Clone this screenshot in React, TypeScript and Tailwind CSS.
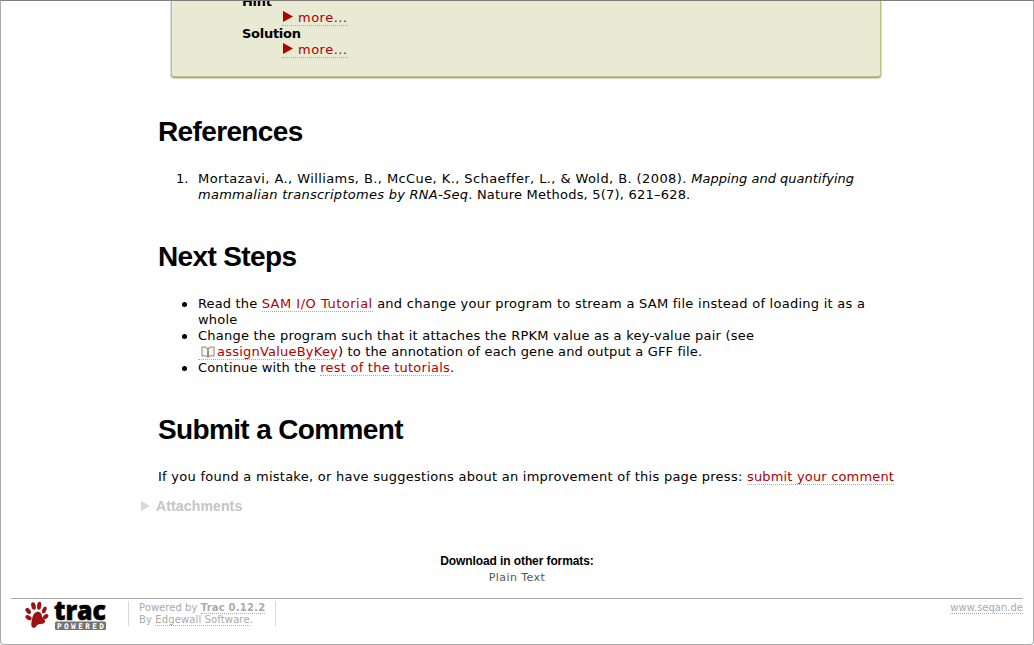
import type { ReactNode } from "react";

const link = "text-[#b00000] border-b border-dotted border-[#aaa] inline-block h-4 leading-[16px]";

function Heading({ children }: { children: ReactNode }) {
  return (
    <h1 className="h-8 pl-[158px] font-['Liberation_Sans',sans-serif] text-[28px] leading-8 font-bold tracking-[-0.64px]">
      {children}
    </h1>
  );
}

function More() {
  return (
    <div className="h-4 pl-[40px]">
      <a className={`${link} tracking-[0.5px]`}>
        <svg className="mr-[5px] inline-block h-[11px] w-[11px] align-[0px]" viewBox="0 0 11 11">
          <path d="M1 0L11 5.5L1 11Z" fill="#b00000" />
        </svg>
        more...
      </a>
    </div>
  );
}

function Bullet() {
  return <span className="absolute top-[6px] left-[-16px] h-[5px] w-[5px] rounded-full bg-black" />;
}

function Book() {
  return (
    <svg className="mr-[2px] ml-[3px] inline-block h-[12px] w-[14px] align-[-2px]" viewBox="0 0 14 12" fill="none" stroke="#8f8f7c" strokeWidth="1.1">
      <path d="M7 11C5.5 9.8 3 9.6 1 9.9V1H4.2C6 1.6 7 3 7 4.8C7 3 8 1.6 9.8 1H13V9.9C11 9.6 8.5 9.8 7 11Z" fill="#fcfcf8" />
      <path d="M7 4.8V11" strokeWidth="2" />
    </svg>
  );
}

function Logo() {
  return (
    <svg className="h-[32px] w-[84px]" viewBox="0 0 84 32">
      <g fill="#9f1015" transform="translate(0 1)">
        <ellipse cx="9.5" cy="6" rx="2.2" ry="3.9" transform="rotate(-14 9.5 6)" />
        <ellipse cx="15.2" cy="5.8" rx="2.1" ry="4" transform="rotate(8 15.2 5.8)" />
        <ellipse cx="4.2" cy="11" rx="2.2" ry="3.4" transform="rotate(-38 4.2 11)" />
        <ellipse cx="20.3" cy="10" rx="2" ry="3.6" transform="rotate(24 20.3 10)" />
        <ellipse cx="4.5" cy="17.6" rx="2.1" ry="3.4" transform="rotate(-58 4.5 17.6)" />
        <ellipse cx="21.7" cy="16.6" rx="2.1" ry="3" transform="rotate(48 21.7 16.6)" />
        <path d="M12.5 12C15.5 10.8 17.4 13 17.7 15.3C18.2 18.2 21.7 19.3 21 22C19.8 24.7 16 23.4 14 24.6C12 25.7 12 28.2 9.4 27.8C6.6 27.2 7.2 23.2 7.7 20.8C8.2 18 8.8 13.4 12.5 12Z" />
      </g>
      <text x="30" y="21.3" textLength="52" lengthAdjust="spacingAndGlyphs" fontFamily="Open Sans" fontWeight="800" fontSize="27" fill="#000" stroke="#000" strokeWidth=".6">trac</text>
      <rect x="31" y="22.5" width="51" height="8.5" rx="1.5" fill="#737373" />
      <text x="33" y="29.6" textLength="47" fontFamily="DejaVu Sans Mono" fontWeight="700" fontSize="7.8" fill="#fff">POWERED</text>
    </svg>
  );
}

export default function App() {
  return (
    <div className="flex h-[645px] w-[1034px] flex-col overflow-hidden rounded-b-[4px] border border-[#aaa] border-t-[#7d7d7d] bg-white font-['DejaVu_Sans',sans-serif] text-[13px] leading-4 whitespace-nowrap text-black">
      <div className="-ml-px flex flex-col">
        <section className="ml-[171px] h-[76px] w-[710px] overflow-hidden rounded-b-[3px] border border-t-0 border-[#bfc17f] bg-[#e8ead4] pl-[70px] shadow-[0_1px_2px_rgba(0,0,0,0.5)]">
          <div className="-mt-[7px] h-4 font-bold tracking-[-0.28px]">Hint</div>
          <More />
          <div className="h-4 font-bold tracking-[-0.28px]">Solution</div>
          <More />
        </section>
        <div className="h-[39px]" />
        <Heading>References</Heading>
        <ol className="mt-[23px] pl-[198px]">
          <li className="relative">
            <span className="absolute -left-[22px]">1.</span>
            <div className="h-4">
              <span className="tracking-[0.41px]">Mortazavi, A., Williams, B., McCue, K., Schaeffer, L., &amp; Wold, B. (2008). </span>
              <i className="tracking-[0.02px]">Mapping and quantifying</i>
            </div>
            <div className="h-4">
              <i className="tracking-[0.27px]">mammalian transcriptomes by RNA-Seq</i><span className="tracking-[0.21px]">. Nature Methods, 5(7), 621–628.</span>
            </div>
          </li>
        </ol>
        <div className="h-[38px]" />
        <Heading>Next Steps</Heading>
        <ul className="mt-[23px] pl-[198px]">
          <li className="relative">
            <Bullet />
            <div className="h-4 tracking-[0.26px]"><span className="tracking-[0.15px]">Read the </span><a className={`${link} tracking-[0.5px]`}>SAM I/O Tutorial</a> and change your program to stream a SAM file instead of loading it as a</div>
            <div className="h-4 tracking-[0.2px]">whole</div>
          </li>
          <li className="relative">
            <Bullet />
            <div className="h-4 tracking-[0.23px]">Change the program such that it attaches the RPKM value as a key-value pair (see</div>
            <div className="h-4 tracking-[0.15px]"><a className={`${link} tracking-[0.22px]`}><Book />assignValueByKey</a>) to the annotation of each gene and output a GFF file.</div>
          </li>
          <li className="relative h-4 tracking-[0.14px]">
            <Bullet />
            Continue with the <a className={`${link} tracking-[0.23px]`}>rest of the tutorials</a>.
          </li>
        </ul>
        <div className="h-[38px]" />
        <Heading>Submit a Comment</Heading>
        <p className="mt-[23px] h-4 pl-[158px] tracking-[0.26px]">
          If you found a mistake, or have suggestions about an improvement of this page press: <a className={`${link} tracking-[0.17px]`}>submit your comment</a>
        </p>
        <div className="mt-[13px] flex h-4 items-center pl-[141px] font-['Liberation_Sans',sans-serif] text-[14px] font-bold tracking-[0.14px] text-[#c4c4c4]">
          <svg className="mr-[6px] h-[10px] w-[9px]" viewBox="0 0 9 10"><path d="M0 0L9 5L0 10Z" fill="#d7d7d7" /></svg>
          Attachments
        </div>
        <div className="mt-[39px] flex flex-col items-center pl-px">
          <div className="h-4 font-['Liberation_Sans',sans-serif] text-[12px] font-bold tracking-[-0.1px]">Download in other formats:</div>
          <div className="mt-px h-4 text-[11px] tracking-[0.45px] text-[#555]">Plain Text</div>
        </div>
        <footer className="mt-[12px] ml-[11px] flex w-[1012px] border-t border-[#aaa] text-[10px] leading-3 text-[#aaa]">
          <div className="ml-[13px] w-[104px]"><Logo /></div>
          <div className="mt-[2px] h-[25px] w-[148px] border-x border-[#d7d7d7] pt-px pl-[10px]">
            <div className="h-3 tracking-[0.05px]">Powered by <a className="inline-block h-3 border-b border-dotted border-[#aaa] font-bold tracking-[0.22px]">Trac 0.12.2</a></div>
            <div className="h-3 tracking-[0.12px]">By <a className="inline-block h-3 border-b border-dotted border-[#aaa]">Edgewall Software</a>.</div>
          </div>
          <a className="mt-[3px] ml-auto h-3 border-b border-dotted border-[#aaa]">www.seqan.de</a>
        </footer>
      </div>
    </div>
  );
}
